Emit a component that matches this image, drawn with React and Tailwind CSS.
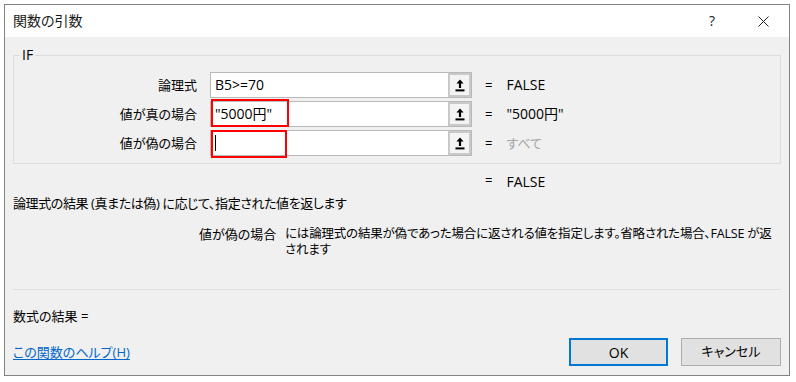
import React from "react"

function UpIcon() {
  return (
    <svg width="10" height="13" viewBox="0 0 10 13">
      <path d="M5 0.5 L8.6 4.6 L6.1 4.6 L6.1 9 L3.9 9 L3.9 4.6 L1.4 4.6 Z" fill="#000" />
      <rect x="0.5" y="10.4" width="9" height="2" fill="#000" />
    </svg>
  )
}

function ArgRow({ label, value, result, muted, mark, markTop, markW, cursor }) {
  return (
    <div className="flex h-[26px] items-center">
      <div className="w-[183px] shrink-0 text-right text-[13px] leading-[18px] text-black">{label}</div>
      <div className="relative ml-[13px] flex h-[26px] w-[262px] shrink-0 border border-[#b9b9b9] bg-white">
        <div className="flex flex-1 items-center pl-[4px] text-[14px] leading-[18px] text-black">
          {value}
          {cursor && <span className="block h-[16px] w-px bg-black" />}
        </div>
        <div className="flex w-[23px] items-center justify-center border-[2px] border-[#c9c9c9] bg-[#f4f4f4]">
          <UpIcon />
        </div>
        {mark && (
          <div className={"absolute left-0 h-[28px] border-2 border-[#ff0000] " + markTop + " " + markW} />
        )}
      </div>
      <div className="ml-[13px] text-[13px] leading-[18px] text-black">=</div>
      <div className={"ml-[14px] leading-[18px] " + (muted ? "text-[13px] text-[#a6a6a6]" : "text-[14px] text-black")}>
        {result}
      </div>
    </div>
  )
}

export default function App() {
  return (
    <div className="h-[382px] w-[796px] bg-white pl-[4px] pt-[4px] font-['Open_Sans','Noto_Sans_CJK_JP',sans-serif] [font-feature-settings:'palt']">
      <div className="flex h-[372px] w-[786px] flex-col border border-[#838383] bg-[#f0f0f0]">
        {/* title bar */}
        <div className="flex h-[32px] items-center bg-white pl-[8px]">
          <div className="text-[14px] leading-[18px] text-[#1a1a1a]">関数の引数</div>
          <div className="ml-auto mr-[43px] text-[14px] leading-[18px] text-[#1a1a1a]">?</div>
          <svg width="11" height="11" viewBox="0 0 11 11" className="mr-[20px]">
            <path d="M0.5 0.5 L10.5 10.5 M10.5 0.5 L0.5 10.5" stroke="#222" strokeWidth="1" />
          </svg>
        </div>

        <div className="flex flex-1 flex-col px-[8px] pb-[9px]">
          <fieldset className="mt-[10px] border border-[#dcdcdc] pb-[7px] pt-[9px]">
            <legend className="ml-[6px] px-[2px] text-[14px] leading-[16px] text-black">IF</legend>
            <div className="flex flex-col gap-[3px]">
              <ArgRow label="論理式" value="B5>=70" result="FALSE" />
              <ArgRow label="値が真の場合" value={'"5000円"'} result={'"5000円"'} mark markTop="top-[-3px]" markW="w-[78px]" />
              <ArgRow label="値が偽の場合" value="" cursor result="すべて" muted mark markTop="top-[-1px]" markW="w-[76px]" />
            </div>
          </fieldset>

          <div className="mt-[8px] flex h-[18px] items-center pl-[472px] text-black">
            <span className="text-[13px]">=</span>
            <span className="ml-[14px] text-[14px]">FALSE</span>
          </div>

          <div className="mt-[4px] whitespace-nowrap text-[13px] leading-[18px] tracking-[-0.4px] text-black">
            論理式の結果 (真または偽) に応じて、指定された値を返します
          </div>

          <div className="mt-[14px] flex text-[13px] leading-[16px] text-black">
            <div className="ml-[186px] w-[86px] shrink-0 whitespace-nowrap">値が偽の場合</div>
            <div className="flex flex-col whitespace-nowrap text-[12.5px] tracking-[-0.2px]">
              <span>には論理式の結果が偽であった場合に返される値を指定します。省略された場合、FALSE が返</span>
              <span>されます</span>
            </div>
          </div>

          <div className="mt-[31px] h-px bg-[#dfdfdf]" />

          <div className="mt-[17px] text-[13px] leading-[18px] text-black">数式の結果 =</div>

          <div className="mt-[13px] flex h-[28px] items-center">
            <a className="text-[13px] leading-[18px] text-[#0066cc] underline underline-offset-2">この関数のヘルプ(H)</a>
            <button className="ml-auto h-[28px] w-[99px] border-2 border-[#0078d7] bg-[#e1e1e1] text-[14px] text-black">
              OK
            </button>
            <button className="ml-[13px] h-[28px] w-[100px] border border-[#adadad] bg-[#e1e1e1] text-[13px] text-black">
              キャンセル
            </button>
          </div>
        </div>
      </div>
    </div>
  )
}
